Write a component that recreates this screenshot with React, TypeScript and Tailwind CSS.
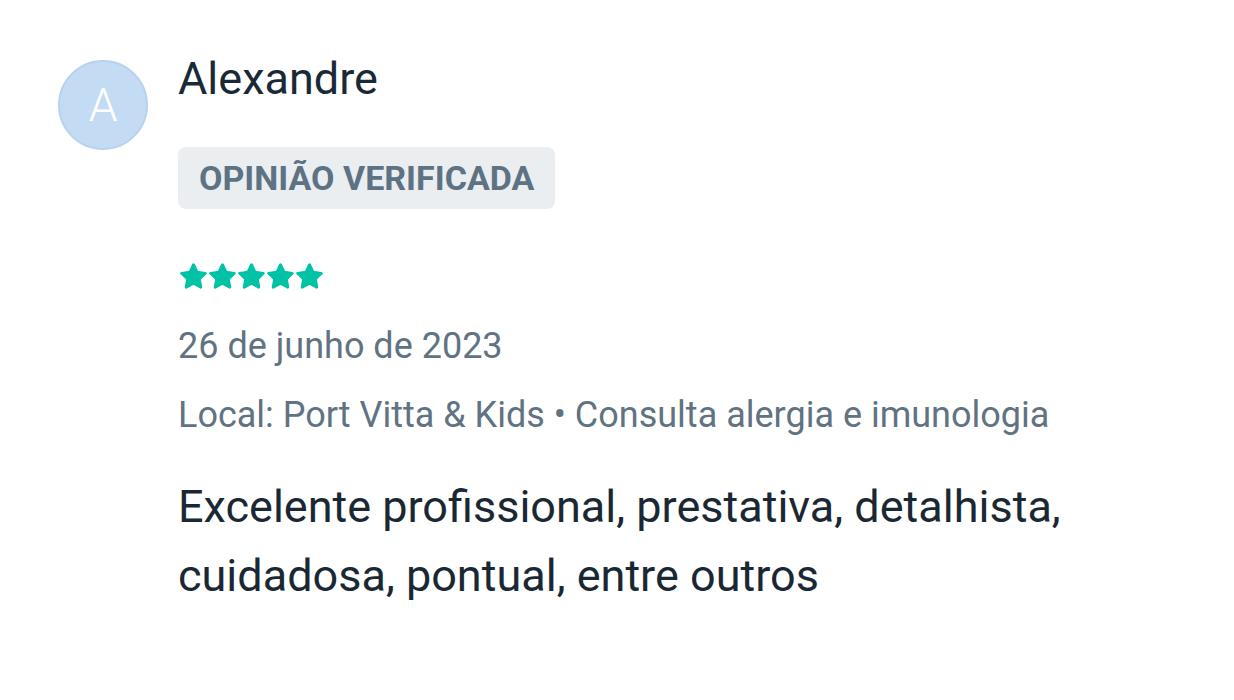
import React from "react";

function Star() {
  return (
    <svg viewBox="1.7 1.7 20.6 19.4" className="w-[27px] h-[26px]" aria-hidden="true">
      <path
        d="M12 2.8l2.75 5.75 6.3.8-4.6 4.35 1.15 6.25L12 16.9l-5.6 3.05 1.15-6.25-4.6-4.35 6.3-.8z"
        fill="#00c3a5"
        stroke="#00c3a5"
        strokeWidth="2.2"
        strokeLinejoin="round"
      />
    </svg>
  );
}

export default function App() {
  return (
    <div className="min-h-[700px] bg-white font-['Roboto',sans-serif]">
      <div className="flex gap-[30px] pl-[58px] pt-[60px]">
        {/* Avatar */}
        <div className="w-[90px] h-[90px] shrink-0 rounded-full bg-[#c3dcf4] border-2 border-[#b8d3ee] flex items-center justify-center">
          <span className="text-white text-[46px] font-light leading-none">A</span>
        </div>

        <div className="flex flex-col">
          <h3 className="text-[#1a2936] text-[45px] leading-[38px]">Alexandre</h3>

          <div className="mt-[49px]">
            <span className="inline-block bg-[#ebeef1] rounded-[8px] px-[21px] py-[11px] text-[#5d7283] text-[34px] leading-[40px] font-bold">
              OPINIÃO VERIFICADA
            </span>
          </div>

          <div className="flex gap-[2px] mt-[54px] ml-[2px]">
            <Star />
            <Star />
            <Star />
            <Star />
            <Star />
          </div>

          <p className="mt-[37px] text-[#5f7382] text-[36px] leading-[40px]">26 de junho de 2023</p>
          <p className="mt-[29px] text-[#5f7382] text-[36px] leading-[40px]">
            Local: Port Vitta &amp; Kids • Consulta alergia e imunologia
          </p>

          <p className="mt-[37px] max-w-[950px] text-[#1a2834] text-[45px] leading-[69px]">
            Excelente profissional, prestativa, detalhista, cuidadosa, pontual, entre outros
          </p>
        </div>
      </div>
    </div>
  );
}
